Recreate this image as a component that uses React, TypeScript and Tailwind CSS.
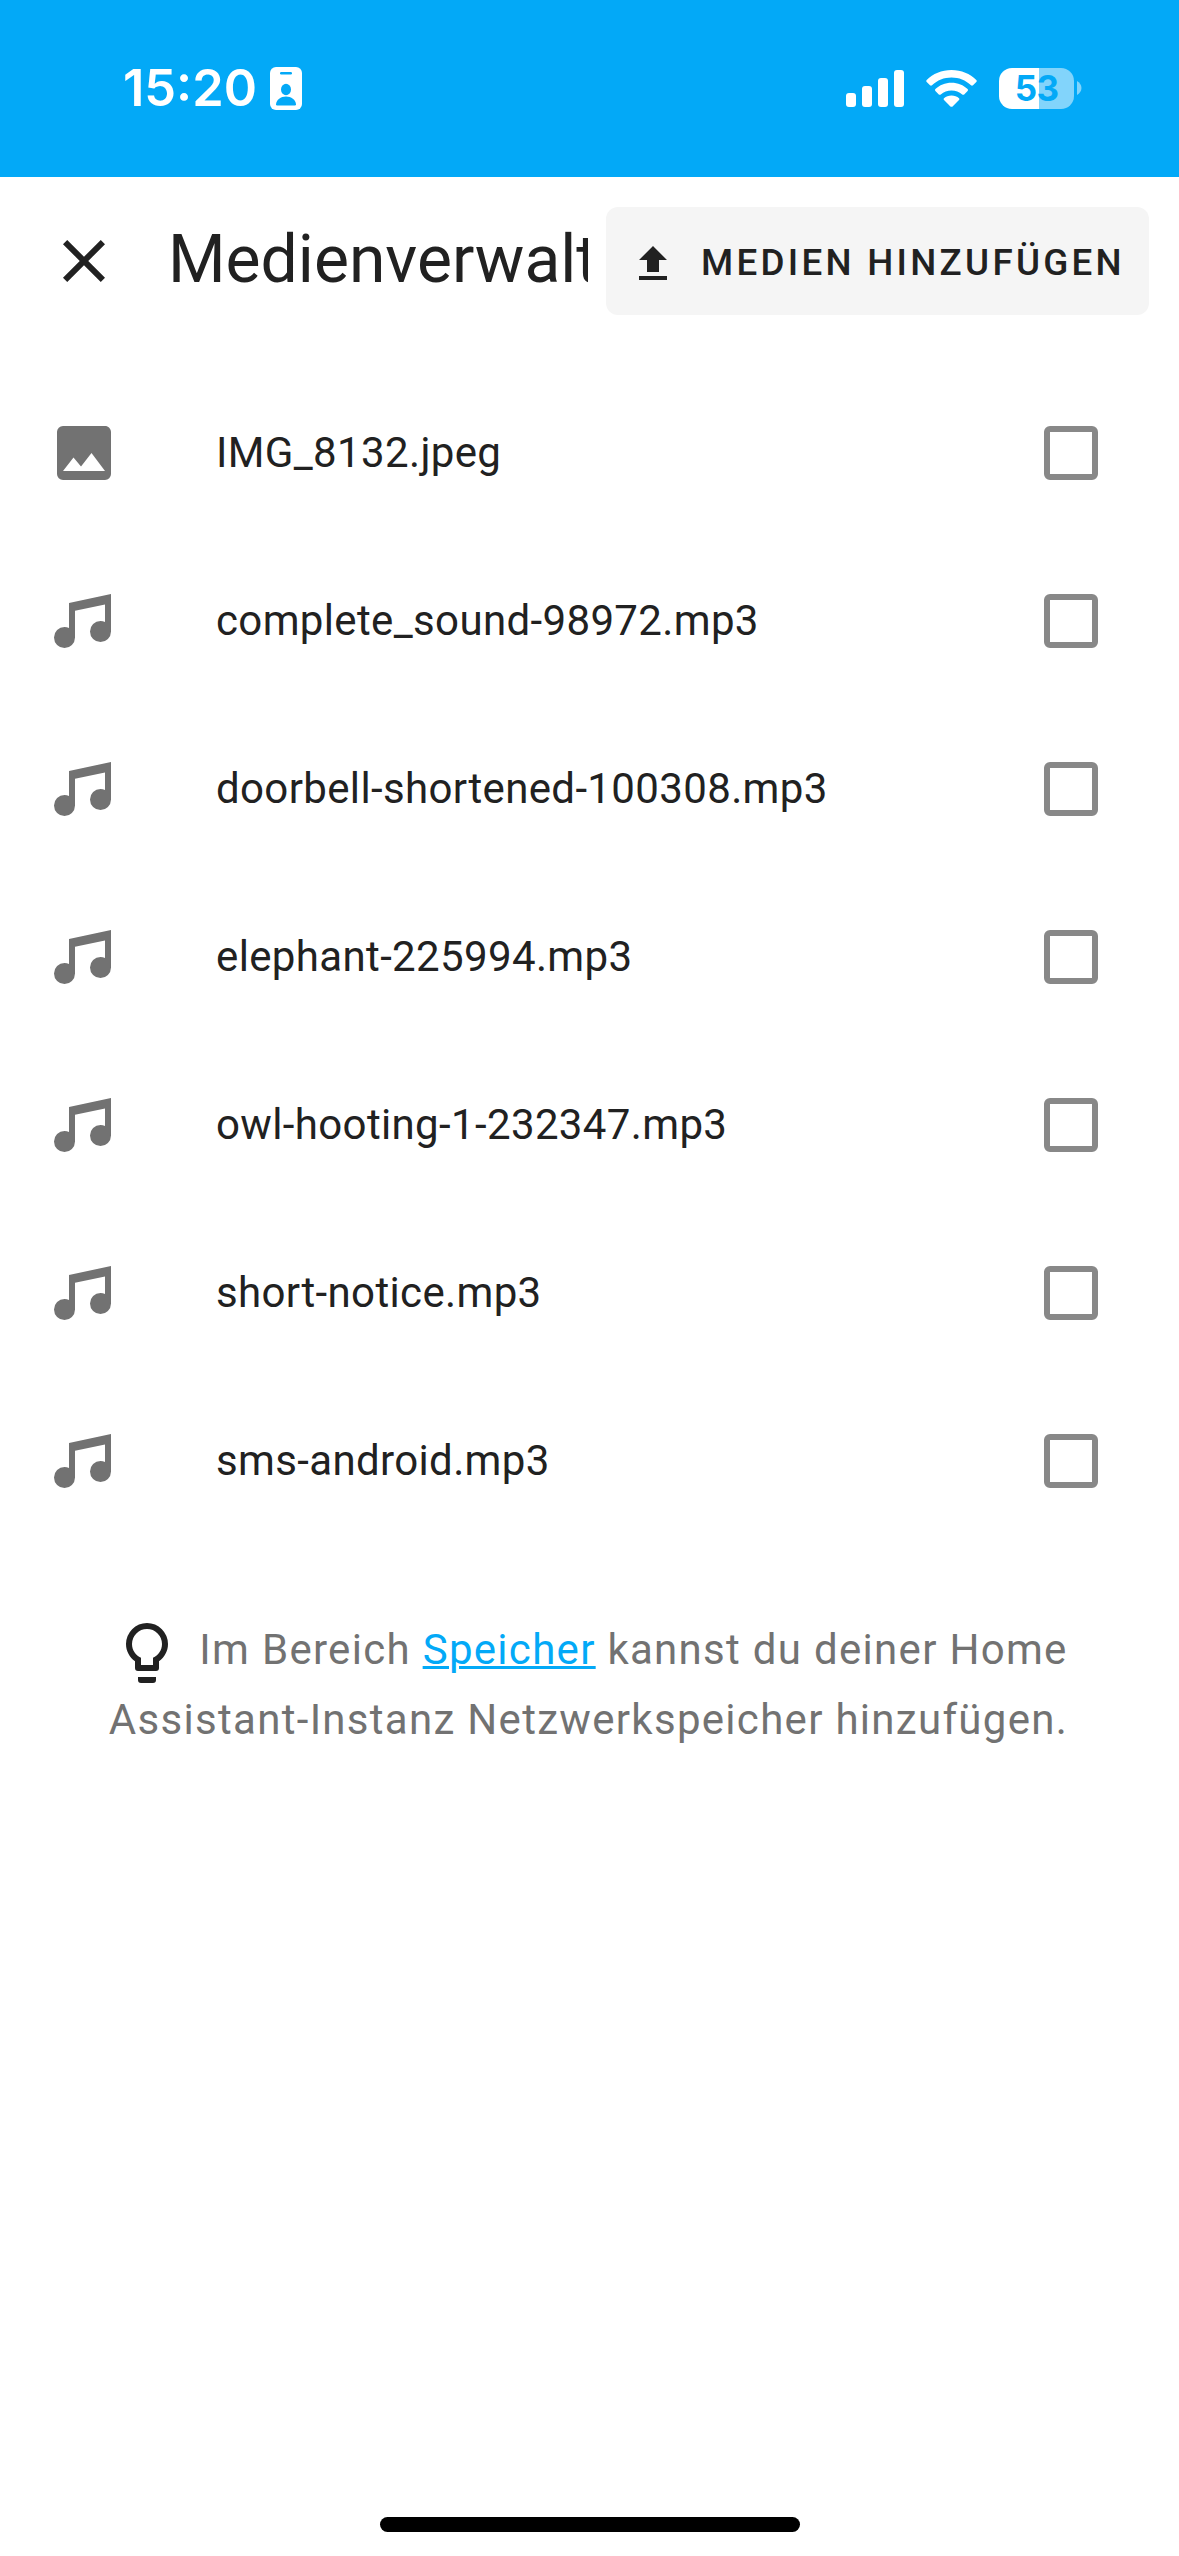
interface MediaItem {
  id: string;
  name: string;
  type: "image" | "audio";
}

const MEDIA_ITEMS: MediaItem[] = [
  { id: "1", name: "IMG_8132.jpeg", type: "image" },
  { id: "2", name: "complete_sound-98972.mp3", type: "audio" },
  { id: "3", name: "doorbell-shortened-100308.mp3", type: "audio" },
  { id: "4", name: "elephant-225994.mp3", type: "audio" },
  { id: "5", name: "owl-hooting-1-232347.mp3", type: "audio" },
  { id: "6", name: "short-notice.mp3", type: "audio" },
  { id: "7", name: "sms-android.mp3", type: "audio" },
];

const ICONS = {
  close: "M19 6.41L17.59 5L12 10.59L6.41 5L5 6.41L10.59 12L5 17.59L6.41 19L12 13.41L17.59 19L19 17.59L13.41 12L19 6.41Z",
  upload: "M9 16V10H5L12 3L19 10H15V16H9M5 20V18H19V20H5Z",
  image: "M8.5 13.5L11 16.5L14.5 12L19 18H5M21 19V5C21 3.89 20.1 3 19 3H5A2 2 0 0 0 3 5V19A2 2 0 0 0 5 21H19A2 2 0 0 0 21 19Z",
  audio:
    "M21 3V15.5A3.5 3.5 0 0 1 17.5 19A3.5 3.5 0 0 1 14 15.5A3.5 3.5 0 0 1 17.5 12C18.04 12 18.55 12.12 19 12.34V6.47L9 8.6V17.5A3.5 3.5 0 0 1 5.5 21A3.5 3.5 0 0 1 2 17.5A3.5 3.5 0 0 1 5.5 14C6.04 14 6.55 14.12 7 14.34V6L21 3Z",
  bulb: "M12 2A7 7 0 0 1 19 9C19 11.38 17.81 13.47 16 14.74V17A1 1 0 0 1 15 18H9A1 1 0 0 1 8 17V14.74C6.19 13.47 5 11.38 5 9A7 7 0 0 1 12 2M9 21V20H15V21A1 1 0 0 1 14 22H10A1 1 0 0 1 9 21M12 4A5 5 0 0 0 7 9C7 11.05 8.23 12.81 10 13.58V16H14V13.58C15.77 12.81 17 11.05 17 9A5 5 0 0 0 12 4Z",
};

function Icon({ path, className }: { path: string; className: string }) {
  return (
    <svg viewBox="0 0 24 24" fill="currentColor" className={className}>
      <path fillRule="evenodd" d={path} />
    </svg>
  );
}

function StatusBar() {
  return (
    <div className="flex h-[177px] items-start justify-between bg-[#03a9f7] pl-[123px] pr-[97px] pt-[58px] text-white">
      <div className="flex h-[60px] items-center">
        <span className="w-[147px] whitespace-nowrap font-['Inter',sans-serif] text-[50.5px] font-semibold leading-[60px]">
          15:20
        </span>
        <svg viewBox="0 0 32 43" className="h-[43px] w-8">
          <rect width="32" height="43" rx="6" fill="#fff" />
          <rect x="10" y="5" width="12" height="2.4" rx="1.2" fill="#03a9f7" />
          <ellipse cx="16" cy="22.5" rx="5" ry="5.7" fill="#03a9f7" />
          <path d="M7.2 38.6Q6 38.6 6 37.2C6.6 32.8 10.6 29.6 16 29.6S25.4 32.8 26 37.2Q26 38.6 24.8 38.6Z" fill="#03a9f7" />
        </svg>
      </div>
      <div className="flex h-[60px] items-center">
        <svg viewBox="0 0 58 37" fill="#fff" className="h-[37px] w-[58px]">
          <rect x="0" y="23" width="10" height="14" rx="3" />
          <rect x="16" y="16" width="10" height="21" rx="3" />
          <rect x="32" y="8" width="10" height="29" rx="3" />
          <rect x="48" y="0" width="10" height="37" rx="3" />
        </svg>
        <svg viewBox="0 0 51 37" fill="#fff" className="ml-[22px] h-[37px] w-[51px]">
          <path d="M25.500 0C35.500 0 44 3.800 50.300 10Q51.200 11 50.300 12L47 15.300Q46 16.200 45 15.300C39.600 10.300 33 7.600 25.500 7.600S11.400 10.300 6 15.300Q5 16.200 4 15.300L.7 12Q-.2 11 .7 10C7 3.800 15.500 0 25.500 0Z" />
          <path d="M25.500 12.800C31.900 12.800 37.400 15.200 41.600 19.100Q42.500 20.100 41.600 21L38.200 24.400Q37.200 25.200 36.200 24.400C33.200 21.800 29.700 20.400 25.500 20.400S17.800 21.800 14.800 24.400Q13.800 25.200 12.800 24.400L9.400 21Q8.500 20.100 9.400 19.100C13.600 15.200 19.100 12.800 25.500 12.800Z" />
          <path d="M25.500 25.600C28.500 25.600 31 26.600 33 28.200Q33.800 29.100 33 30L26.600 36.400Q25.500 37.300 24.400 36.400L18 30Q17.200 29.100 18 28.200C20 26.600 22.500 25.600 25.500 25.600Z" />
        </svg>
        <div className="ml-[22px] flex h-[41px] w-[75px] items-center justify-center rounded-[13px] bg-[linear-gradient(to_right,#fff_40px,#82d4fb_40px)] font-['Inter',sans-serif] text-[35px] font-bold leading-none tracking-[-0.8px] text-[#03a9f7]">
          53
        </div>
        <svg viewBox="0 0 5 14" className="ml-[3px] h-[14px] w-[5px]">
          <path d="M0 0C2.500 1.500 4.500 4 4.500 7S2.500 12.500 0 14Z" fill="#82d4fb" />
        </svg>
      </div>
    </div>
  );
}

function DialogHeader() {
  return (
    <header className="flex h-[168px] items-center pl-12 pr-[30px]">
      <button className="shrink-0">
        <Icon path={ICONS.close} className="size-[72px]" />
      </button>
      <h1 className="ml-12 w-[420px] shrink-0 overflow-hidden whitespace-nowrap pb-0.5 text-[66px] leading-[84px]">
        Medienverwaltung
      </h1>
      <button className="ml-[18px] flex h-[108px] w-[543px] shrink-0 items-center whitespace-nowrap rounded-xl bg-[#f5f5f5] pl-[23px] text-[36.75px] font-medium tracking-[3.28px]">
        <Icon path={ICONS.upload} className="mt-1.5 mr-6 size-12 shrink-0" />
        <span className="pt-[3px]">MEDIEN HINZUFÜGEN</span>
      </button>
    </header>
  );
}

function MediaRow({ item }: { item: MediaItem }) {
  return (
    <li className="flex h-[168px] items-center pl-12 pr-[81px]">
      <Icon path={ICONS[item.type]} className="size-[72px] shrink-0 text-[#727272]" />
      <span className="ml-24 flex-1 pb-0.5 text-[42px] tracking-[0.36px]">{item.name}</span>
      <span className="size-[54px] rounded-md border-6 border-[#888888]" />
    </li>
  );
}

export default function App() {
  return (
    <div className="flex h-[2556px] w-[1179px] flex-col bg-white font-['Roboto',sans-serif] text-[#212121]">
      <StatusBar />
      <DialogHeader />
      <ul className="mt-6">
        {MEDIA_ITEMS.map((item) => (
          <MediaRow key={item.id} item={item} />
        ))}
      </ul>
      <div className="mt-[70px] pr-0.5 text-center text-[42px] leading-[70px] tracking-[1.3px] text-[#727272]">
        <p className="flex h-[70px] items-center justify-center pl-0.5">
          <Icon path={ICONS.bulb} className="mt-1.5 mr-4 size-[72px] text-[#212121]" />
          <span>
            Im Bereich <a className="text-[#03a9f7] underline decoration-[3px]">Speicher</a> kannst du deiner Home
          </span>
        </p>
        <p>Assistant-Instanz Netzwerkspeicher hinzufügen.</p>
      </div>
      <div className="mx-auto mt-auto mb-6 h-[15px] w-[420px] rounded-full bg-black" />
    </div>
  );
}
